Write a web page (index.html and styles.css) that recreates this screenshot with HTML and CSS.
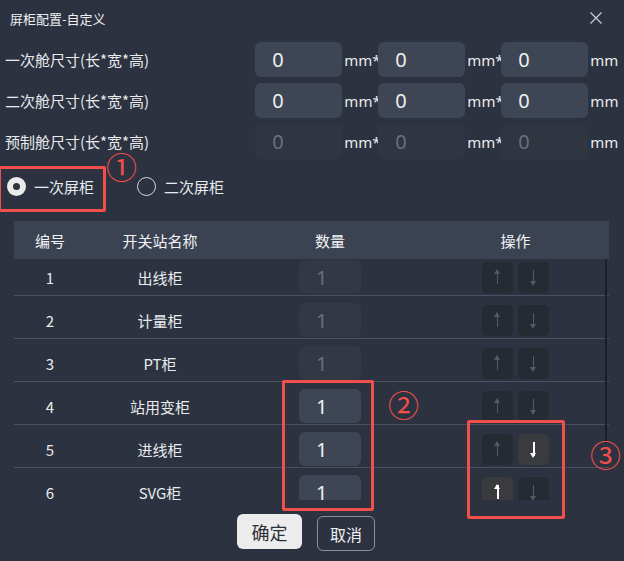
FILE: index.html
```html
<!DOCTYPE html>
<html lang="zh-CN">
<head>
    <meta charset="UTF-8">
    <title>屏柜配置-自定义</title>
    <link rel="stylesheet" href="styles.css">
</head>
<body>
    <div class="dialog">
        <div class="title-bar">
            <span class="title">屏柜配置-自定义</span>
            <span class="close">
                <svg width="12" height="12" viewBox="0 0 12 12"><path d="M0.5 0.5 L11.5 11.5 M11.5 0.5 L0.5 11.5" stroke="#c9ccd2" stroke-width="1.3" fill="none"/></svg>
            </span>
        </div>

        <!-- size rows -->
        <div class="form">
            <div class="form-row">
                <label class="form-label">一次舱尺寸(长*宽*高)</label>
                <input class="dim-input" type="text" value="0">
                <span class="unit">mm*</span>
                <input class="dim-input" type="text" value="0">
                <span class="unit">mm*</span>
                <input class="dim-input" type="text" value="0">
                <span class="unit">mm</span>
            </div>
            <div class="form-row">
                <label class="form-label shift">二次舱尺寸(长*宽*高)</label>
                <input class="dim-input" type="text" value="0">
                <span class="unit">mm*</span>
                <input class="dim-input" type="text" value="0">
                <span class="unit">mm*</span>
                <input class="dim-input" type="text" value="0">
                <span class="unit">mm</span>
            </div>
            <div class="form-row">
                <label class="form-label">预制舱尺寸(长*宽*高)</label>
                <input class="dim-input" type="text" value="0" disabled>
                <span class="unit">mm*</span>
                <input class="dim-input" type="text" value="0" disabled>
                <span class="unit">mm*</span>
                <input class="dim-input" type="text" value="0" disabled>
                <span class="unit">mm</span>
            </div>
        </div>

        <div class="radio-group">
            <label class="radio checked"><span class="radio-dot"></span>一次屏柜</label>
            <label class="radio"><span class="radio-dot"></span>二次屏柜</label>
        </div>

        <!-- cabinet table -->
        <div class="table">
            <div class="thead">
                <div class="cell">编号</div>
                <div class="cell">开关站名称</div>
                <div class="cell">数量</div>
                <div class="cell">操作</div>
            </div>
            <div class="tbody">
                <div class="tbody-inner">
                    <div class="row">
                        <div class="cell">1</div>
                        <div class="cell">出线柜</div>
                        <div class="cell"><input class="qty-input" type="text" value="1" disabled></div>
                        <div class="cell ops"><button class="op-btn up"></button><button class="op-btn down"></button></div>
                    </div>
                    <div class="row">
                        <div class="cell">2</div>
                        <div class="cell">计量柜</div>
                        <div class="cell"><input class="qty-input" type="text" value="1" disabled></div>
                        <div class="cell ops"><button class="op-btn up"></button><button class="op-btn down"></button></div>
                    </div>
                    <div class="row">
                        <div class="cell">3</div>
                        <div class="cell">PT柜</div>
                        <div class="cell"><input class="qty-input" type="text" value="1" disabled></div>
                        <div class="cell ops"><button class="op-btn up"></button><button class="op-btn down"></button></div>
                    </div>
                    <div class="row">
                        <div class="cell">4</div>
                        <div class="cell">站用变柜</div>
                        <div class="cell"><input class="qty-input" type="text" value="1"></div>
                        <div class="cell ops"><button class="op-btn up"></button><button class="op-btn down"></button></div>
                    </div>
                    <div class="row">
                        <div class="cell">5</div>
                        <div class="cell">进线柜</div>
                        <div class="cell"><input class="qty-input" type="text" value="1"></div>
                        <div class="cell ops"><button class="op-btn up"></button><button class="op-btn down active"></button></div>
                    </div>
                    <div class="row">
                        <div class="cell">6</div>
                        <div class="cell">SVG柜</div>
                        <div class="cell"><input class="qty-input" type="text" value="1"></div>
                        <div class="cell ops"><button class="op-btn up active"></button><button class="op-btn down"></button></div>
                    </div>
                </div>
                <div class="scroll-thumb"></div>
            </div>
        </div>

        <div class="footer">
            <button class="btn btn-primary">确定</button>
            <button class="btn btn-plain">取消</button>
        </div>

        <!-- annotations -->
        <div class="mark mark-1"></div>
        <div class="mark mark-2"></div>
        <div class="mark mark-3"></div>
        <span class="mark-num num-1">①</span>
        <span class="mark-num num-2">②</span>
        <span class="mark-num num-3">③</span>
    </div>
</body>
</html>
```

FILE: styles.css
```css
body {
    margin: 0;
    background-color: #2c323f;
    font-family: "Noto Sans CJK SC", "Noto Sans", sans-serif;
    color: #e9ebee;
}

.dialog {
    position: relative;
    width: 624px;
    height: 561px;
    overflow: hidden;
    background-color: #2c323f;
}

/* Title */
.title-bar {
    height: 36px;
    display: flex;
    align-items: center;
    justify-content: space-between;
    padding: 0 22px 0 10px;
}

.title {
    font-size: 13px;
    color: #eef0f3;
}

.close {
    display: flex;
}

/* Size rows */
.form {
    margin-top: 6px;
    display: flex;
    flex-direction: column;
    gap: 6px;
}

.form-row {
    display: flex;
    align-items: center;
    height: 35px;
}

.form-label {
    width: 252px;
    padding-left: 5px;
    font-size: 15px;
    color: #e9ebee;
}

.form-label.shift {
    width: 253px;
}

.dim-input {
    width: 87px;
    height: 35px;
    box-sizing: border-box;
    border: none;
    border-radius: 6px;
    background-color: #3e4655;
    color: #eef0f3;
    font-family: "Noto Sans", sans-serif;
    font-size: 20px;
    padding: 0 0 0 17px;
    outline: none;
}

.dim-input:disabled {
    background-color: #2f3541;
    color: #6a707b;
}

.unit {
    width: 36px;
    font-size: 15px;
    font-family: "Noto Sans", sans-serif;
    color: #e9ebee;
    padding-left: 2px;
    box-sizing: border-box;
}

/* Radios */
.radio-group {
    display: flex;
    align-items: center;
    gap: 43px;
    height: 24px;
    margin-top: 15px;
    padding-left: 7px;
}

.radio {
    display: flex;
    align-items: center;
    gap: 8px;
    font-size: 15px;
    color: #e9ebee;
}

.radio-dot {
    width: 19px;
    height: 19px;
    box-sizing: border-box;
    border-radius: 50%;
    border: 1px solid #d4d6da;
}

.radio.checked .radio-dot {
    border: 6px solid #ebebeb;
    background-color: #2c323f;
}

/* Table */
.table {
    margin: 23px 15px 0 14px;
}

.thead,
.row {
    display: grid;
    grid-template-columns: 72px 148px 192px 179px 1fr;
}

.thead {
    height: 38px;
    align-items: center;
    background-color: #3b4352;
    font-size: 15px;
    color: #f2f3f5;
}

.cell {
    display: flex;
    align-items: center;
    justify-content: center;
}

.tbody {
    position: relative;
    height: 241px;
    overflow: hidden;
}

/* body is scrolled a few pixels down */
.tbody-inner {
    margin-top: -6px;
}

.row {
    height: 43px;
    box-sizing: border-box;
    padding: 7px 0 1px;
    border-bottom: 1px solid #4a5262;
    font-size: 15px;
    color: #e9ebee;
}

.row .cell {
    height: 34px;
}

.qty-input {
    width: 62px;
    height: 34px;
    box-sizing: border-box;
    border: none;
    border-radius: 6px;
    background-color: #3e4655;
    color: #eef0f3;
    font-family: "Noto Sans", sans-serif;
    font-size: 20px;
    padding: 0 0 0 17px;
    outline: none;
}

.qty-input:disabled {
    background-color: #323844;
    color: #6a707b;
}

.ops {
    gap: 5px;
}

.op-btn {
    width: 31px;
    height: 31px;
    border: none;
    border-radius: 5px;
    background-color: #262a33;
    padding: 0;
    position: relative;
}

.op-btn::before {
    content: "";
    position: absolute;
    left: 15px;
    top: 8px;
    width: 1px;
    height: 14px;
    background-color: #545a65;
}

.op-btn::after {
    content: "";
    position: absolute;
    left: 12px;
    border-left: 3.5px solid transparent;
    border-right: 3.5px solid transparent;
}

.op-btn.up::after {
    top: 7px;
    border-bottom: 5px solid #545a65;
}

.op-btn.down::after {
    top: 19px;
    border-top: 5px solid #545a65;
}

.op-btn.active {
    background-color: #3a3b3e;
}

.op-btn.active::before {
    width: 2px;
    left: 14.5px;
    background-color: #ffffff;
}

.op-btn.up.active::after {
    border-bottom-color: #ffffff;
}

.op-btn.down.active::after {
    border-top-color: #ffffff;
}

.scroll-thumb {
    position: absolute;
    left: 591px;
    top: 0;
    width: 2px;
    height: 184px;
    background-color: #1b1e25;
}

/* Footer */
.footer {
    display: flex;
    align-items: flex-start;
    gap: 15px;
    margin-top: 14px;
    padding-left: 237px;
}

.btn {
    height: 35px;
    border-radius: 6px;
    font-family: "Noto Sans CJK SC", sans-serif;
    cursor: pointer;
}

.btn-primary {
    width: 65px;
    border: none;
    background-color: #ececec;
    color: #2b2f36;
    font-size: 18px;
}

.btn-plain {
    width: 58px;
    margin-top: 2px;
    border: 1px solid #8c9098;
    background-color: transparent;
    color: #f0f1f3;
    font-size: 16px;
}

/* Annotations */
.mark {
    position: absolute;
    border: 3px solid #f24f4b;
    border-radius: 2px;
    box-sizing: border-box;
}

.mark-1 {
    left: -2px;
    top: 166px;
    width: 108px;
    height: 46px;
}

.mark-2 {
    left: 282px;
    top: 380px;
    width: 92px;
    height: 131px;
}

.mark-3 {
    left: 467px;
    top: 420px;
    width: 98px;
    height: 99px;
}

.mark-num {
    position: absolute;
    color: #f24f4b;
    font-family: "Noto Sans CJK SC", sans-serif;
    font-size: 31px;
    line-height: 31px;
}

.num-1 {
    left: 106px;
    top: 150px;
}

.num-2 {
    left: 388px;
    top: 388px;
}

.num-3 {
    left: 590px;
    top: 438px;
}
```
